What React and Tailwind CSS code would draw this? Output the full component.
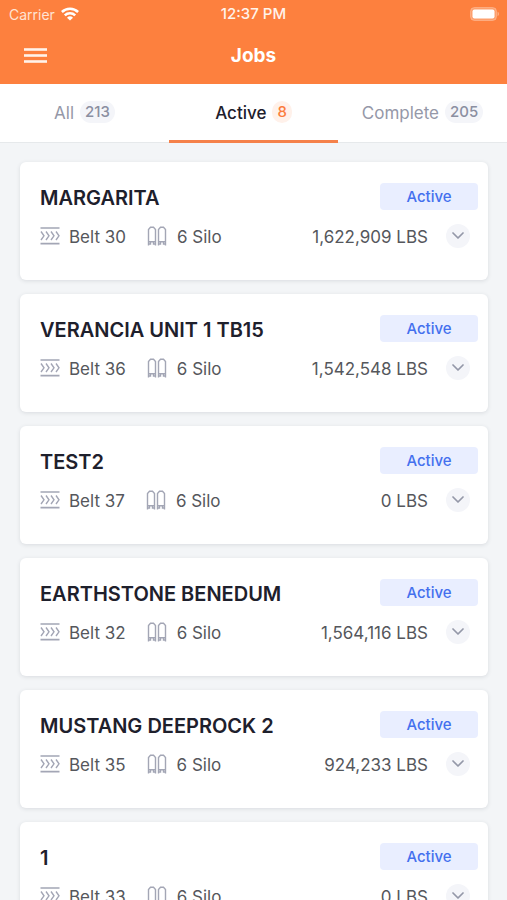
import React, { useState } from "react";
import clsx from "clsx";

const TABS = [
  { id: "all", label: "All", count: 213 },
  { id: "active", label: "Active", count: 8 },
  { id: "complete", label: "Complete", count: 205 },
];

const JOBS = [
  { name: "MARGARITA", belt: 30, silos: 6, weight: "1,622,909" },
  { name: "VERANCIA UNIT 1 TB15", belt: 36, silos: 6, weight: "1,542,548" },
  { name: "TEST2", belt: 37, silos: 6, weight: "0" },
  { name: "EARTHSTONE BENEDUM", belt: 32, silos: 6, weight: "1,564,116" },
  { name: "MUSTANG DEEPROCK 2", belt: 35, silos: 6, weight: "924,233" },
  { name: "1", belt: 33, silos: 6, weight: "0" },
];

function WifiIcon() {
  return (
    <svg width="18" height="14" viewBox="0 0 18 14" fill="none" stroke="#fff" strokeWidth="2.5">
      <path d="M0.9 5a11.5 11.5 0 0 1 16.2 0" />
      <path d="M3.8 8.3a7.4 7.4 0 0 1 10.4 0" />
      <path d="M9 13.6 6 10.7a4.3 4.3 0 0 1 6 0z" fill="#fff" stroke="none" />
    </svg>
  );
}

function BatteryIcon() {
  return (
    <svg width="29" height="14" viewBox="0 0 29 14">
      <rect x="0.5" y="0.5" width="26" height="13" rx="4" fill="#fff" fillOpacity="0.25" stroke="#fff" strokeOpacity="0.25" />
      <rect x="2.5" y="2.5" width="22" height="9" rx="2" fill="#fff" />
      <path d="M27.6 4.8c1.6.6 1.6 3.8 0 4.4z" fill="#fff" fillOpacity="0.45" />
    </svg>
  );
}

function MenuIcon() {
  return (
    <svg width="23" height="16" viewBox="0 0 23 16" fill="#fff3ea">
      <rect y="0.2" width="23" height="2.6" />
      <rect y="6.2" width="23" height="2.6" />
      <rect y="12.2" width="23" height="2.6" />
    </svg>
  );
}

function BeltIcon() {
  return (
    <svg width="20" height="18" viewBox="0 0 20 18" fill="none" stroke="#a3a6b5" strokeWidth="1.4">
      <path d="M0.5 1h19M0.5 16.6h19" strokeWidth="1.6" />
      <path d="M1 4.5l3 4.3L1 13M6 4.5l3 4.3L6 13M11 4.5l3 4.3-3 4.2M16 4.5l3 4.3-3 4.2" />
    </svg>
  );
}

function SiloIcon() {
  return (
    <svg width="20" height="20" viewBox="0 0 20 20" fill="none" stroke="#a3a6b5" strokeWidth="1.4">
      <path d="M1.5 19.5v-16l2-2.3h3l2 2.3v16M1.5 15.8h7M3.5 15.8V18h-2M6.5 15.8V18h2" />
      <path d="M11.5 19.5v-16l2-2.3h3l2 2.3v16M11.5 15.8h7M13.5 15.8V18h-2M16.5 15.8V18h2" />
    </svg>
  );
}

function ChevronIcon() {
  return (
    <svg width="12" height="8" viewBox="0 0 12 8" fill="none" stroke="#9498a8" strokeWidth="1.7" strokeLinecap="round" strokeLinejoin="round">
      <path d="M1 1l5 5 5-5" />
    </svg>
  );
}

function Tab({ tab, active, onSelect }) {
  return (
    <button
      role="tab"
      aria-selected={active}
      onClick={onSelect}
      className={clsx(
        "flex flex-1 items-center justify-center gap-1.5 border-b-3 pt-0.5",
        active
          ? "border-[#f5814a] font-medium text-[#1e202c]"
          : "border-transparent text-[#9598a8]"
      )}
    >
      <span className="text-[17px] leading-6">{tab.label}</span>
      <span
        className={clsx(
          "mb-0.5 rounded-full px-[5px] text-[15px] leading-[22px] font-medium",
          active ? "bg-[#fff1ea] text-[#fb7c3c]" : "bg-[#f4f5f9] text-[#8b8fa1]"
        )}
      >
        {tab.count}
      </span>
    </button>
  );
}

function JobCard({ job }) {
  return (
    <li className="rounded-md bg-white pt-[21px] pb-[31px] pl-5 shadow-[0_1px_4px_rgba(30,40,60,0.12)]">
      <div className="flex items-center justify-between pr-2.5">
        <h2 className="pt-1 text-[20px] leading-[23px] font-semibold text-[#1e202c]">{job.name}</h2>
        <span className="h-[27px] w-[98px] rounded bg-[#e9eeff] text-center text-[15px] leading-[28px] font-medium text-[#4470ee]">
          Active
        </span>
      </div>

      <div className="mt-[13px] flex items-center pr-[18px] text-[17px] text-[#55575c]">
        <BeltIcon />
        <span className="ml-[9px] pt-0.5 leading-6">Belt {job.belt}</span>
        <span className="ml-[21px] flex items-center gap-2.5">
          <SiloIcon />
          <span className="pt-0.5 leading-6">{job.silos} Silo</span>
        </span>
        <span className="ml-auto pt-0.5 leading-6">{job.weight} LBS</span>
        <button
          aria-label={`Show details of ${job.name}`}
          className="ml-[18px] flex size-6 items-center justify-center rounded-full bg-[#f4f5f9]"
        >
          <ChevronIcon />
        </button>
      </div>
    </li>
  );
}

export default function App() {
  const [selected, setSelected] = useState("active");

  return (
    <div className="flex h-screen flex-col overflow-hidden bg-[#f3f5f7] font-['Inter',sans-serif]">
      <header className="shrink-0 bg-[#fd803e] text-white">
        {/* Status bar */}
        <div className="grid h-7 grid-cols-3 items-center px-2 text-[15px]">
          <span className="flex items-center gap-1.5 pl-px text-[14px] text-[#ffe3d3]">
            Carrier <WifiIcon />
          </span>
          <span className="text-center font-medium text-[#fff3ea]">12:37 PM</span>
          <span className="flex justify-end">
            <BatteryIcon />
          </span>
        </div>

        {/* Title bar */}
        <div className="grid h-14 grid-cols-3 items-center px-6">
          <button aria-label="Open menu" className="justify-self-start">
            <MenuIcon />
          </button>
          <h1 className="pt-px text-center text-[19px] font-bold">Jobs</h1>
        </div>
      </header>

      <div role="tablist" className="flex h-[59px] shrink-0 bg-white shadow-[inset_0_-1px_0_#e6e9eb]">
        {TABS.map((tab) => (
          <Tab key={tab.id} tab={tab} active={tab.id === selected} onSelect={() => setSelected(tab.id)} />
        ))}
      </div>

      <main className="min-h-0 flex-1 overflow-y-auto [scrollbar-width:none]">
        <ul className="flex flex-col gap-3.5 py-[19px] pr-[19px] pl-5">
          {JOBS.map((job) => (
            <JobCard key={job.name} job={job} />
          ))}
        </ul>
      </main>
    </div>
  );
}
